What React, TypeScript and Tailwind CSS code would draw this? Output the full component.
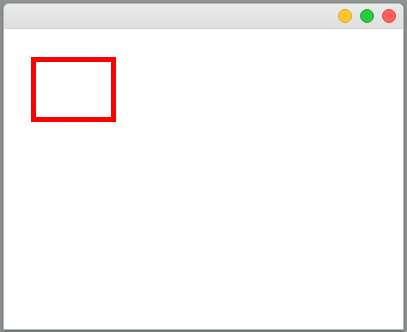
export default function App() {
  return (
    <div className="w-[407px] h-[332px] bg-[#8e9490] pt-[3px] pl-[3px] pr-[3px] pb-[2px] flex">
      <div className="flex-1 flex flex-col rounded-t-[6px] overflow-hidden bg-white border border-[#b8bab8] shadow-[0_1px_3px_rgba(0,0,0,0.35)]">
        <div className="h-[25px] shrink-0 bg-gradient-to-b from-[#ebebeb] to-[#dedede] flex items-center justify-end gap-2 pr-[7px] border-b border-[#d6d6d6]">
          <div className="w-[14px] h-[14px] rounded-full bg-[#ffc52f] border border-[#e0a820]" />
          <div className="w-[14px] h-[14px] rounded-full bg-[#27c93f] border border-[#1fae34]" />
          <div className="w-[14px] h-[14px] rounded-full bg-[#ff5f57] border border-[#e2463f]" />
        </div>
        <div className="flex-1 bg-white pl-[27px] pt-[28px]">
          <div className="w-[85px] h-[65px] border-[5px] border-[#ff0000]" />
        </div>
      </div>
    </div>
  );
}
